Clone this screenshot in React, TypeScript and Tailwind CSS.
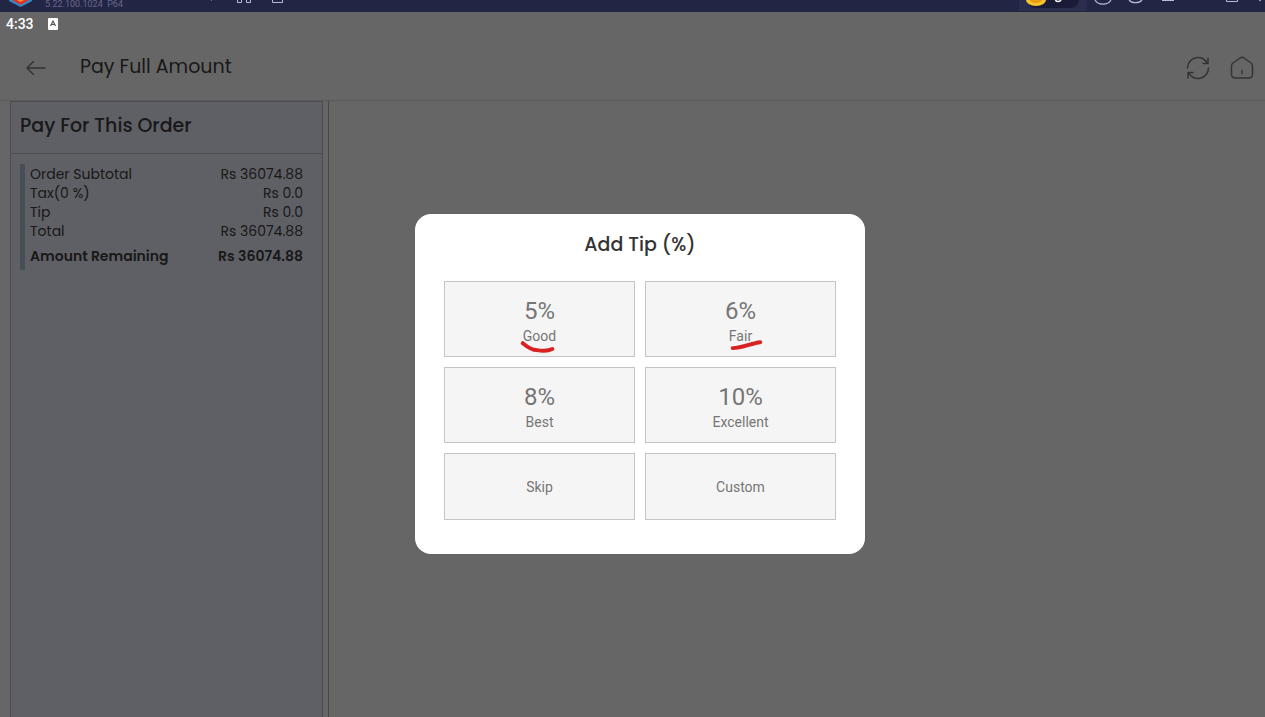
import React from 'react';

interface SummaryRow {
  label: string;
  value: string;
}

interface TipOption {
  percent: string;
  label: string;
  mark?: string;
}

const summary: SummaryRow[] = [
  { label: 'Order Subtotal', value: 'Rs 36074.88' },
  { label: 'Tax(0 %)', value: 'Rs 0.0' },
  { label: 'Tip', value: 'Rs 0.0' },
  { label: 'Total', value: 'Rs 36074.88' },
];

// mark is the hand-drawn underline, in the button's own 190x75 space
const tips: TipOption[] = [
  { percent: '5%', label: 'Good', mark: 'M78 62 C83 66 88 69 92 69 C98 70 104 70 108 68' },
  { percent: '6%', label: 'Fair', mark: 'M87 67 C97 67 106 62 115 61' },
  { percent: '8%', label: 'Best' },
  { percent: '10%', label: 'Excellent' },
];

const EmulatorBar: React.FC = () => (
  <div className="h-3 shrink-0 overflow-hidden bg-[#232544] flex items-start justify-between">
    <div className="flex items-start pl-2">
      <svg className="w-6 h-3" viewBox="0 0 24 12" fill="none">
        <path d="M1 0 V1 L12.500 7 L24 1 V0 Z" fill="#2d8fd0" />
        <path d="M4 0 L12.500 5 L21 0 Z" fill="#e02f2a" />
        <path d="M9 0 L12.500 2 L16 0 Z" fill="#f59a23" />
      </svg>
      <span className="ml-[13px] w-[166px] whitespace-pre font-[Roboto,sans-serif] text-[9px] leading-2 text-[#66688c]">5.22.100.1024  P64</span>
      <svg className="w-20 h-3" viewBox="0 0 80 12" fill="none" stroke="#b9bbdc">
        <path d="M0 0 V1" />
        <path d="M26.500 0 V2.500 H30.500 V0 M35.500 0 V2.500 H39.500 V0 M61.500 0 V2.500 H71.500 V0" />
      </svg>
    </div>
    <svg className="w-[246px] h-3 shrink-0" viewBox="0 0 246 12" fill="none">
      <path d="M0 0 H68 V11 H0 Z" fill="#2b2d4f" />
      <path d="M8 0 H60 C59 5 56 8 51 8 H17 C12 8 9 5 8 0 Z" fill="#1a1b36" />
      <path d="M7 0 A10 6 0 0 0 27 0 Z" fill="#f6c62c" />
      <path d="M11 0 A6 3 0 0 0 23 0 Z" fill="#e99c14" />
      <path d="M36.500 0 C37 2 41 2 42 0" stroke="#fff" strokeWidth="1.500" />
      <path d="M76 0 C79 5.500 89 5.500 92 0 M110 0 C113 3.500 120 3.500 123 0" stroke="#b9bbdc" strokeWidth="1.200" />
      <path d="M143 0.500 H155 M207.500 0 V1.500 H218.500 V0 M240 1 L242 0" stroke="#b9bbdc" />
    </svg>
  </div>
);

const OrderPanel: React.FC = () => (
  <aside className="w-[313px] shrink-0 border border-b-0 border-[#c0c0c8] bg-[#edeffd]">
    <h2 className="h-[52px] border-b border-[#c0c0c8] px-[9px] pt-[9px] text-[19px] leading-[30px] font-medium text-[#404040]">Pay For This Order</h2>
    <div className="ml-[9px] mr-[19px] mt-[10px] border-l-5 border-[#b4c2d6] pt-px pl-[5px] text-sm text-[#404040]">
      <dl>
        {summary.map((row) => (
          <div key={row.label} className="flex justify-between leading-[19px]">
            <dt>{row.label}</dt>
            <dd>{row.value}</dd>
          </div>
        ))}
        <div className="flex justify-between pt-1 pb-[3px] leading-[22px] font-semibold">
          <dt>Amount Remaining</dt>
          <dd>Rs 36074.88</dd>
        </div>
      </dl>
    </div>
  </aside>
);

const TipDialog: React.FC = () => (
  <div role="dialog" aria-modal="true" aria-labelledby="tip-title" className="w-[450px] rounded-2xl bg-white px-[29px] pt-4 pb-[34px]">
    <h2 id="tip-title" className="text-center text-[19px] leading-[30px] font-medium text-[#333]">Add Tip (%)</h2>
    <div className="mt-[21px] grid grid-cols-2 gap-[10px] font-[Roboto,sans-serif] text-[#757575]">
      {tips.map((tip) => (
        <button key={tip.label} className="relative flex h-[76px] flex-col items-center border border-[#c4c4c4] bg-[#f5f5f5] pt-[14px]">
          <span className="text-2xl leading-[30px]">{tip.percent}</span>
          <span className="text-sm leading-5">{tip.label}</span>
          {tip.mark && (
            <svg className="absolute inset-0 w-full h-full" viewBox="0 0 190 75" fill="none" stroke="#d92323" strokeWidth="4" strokeLinecap="round">
              <path d={tip.mark} />
            </svg>
          )}
        </button>
      ))}
      {['Skip', 'Custom'].map((label) => (
        <button key={label} className="h-[67px] border border-[#c4c4c4] bg-[#f5f5f5] text-sm">{label}</button>
      ))}
    </div>
  </div>
);

const App: React.FC = () => {
  return (
    <div className="flex min-h-screen flex-col bg-white font-[Poppins,Inter,sans-serif]">
      <EmulatorBar />
      <div className="relative flex grow flex-col">
        <div className="h-6 shrink-0" />
        <header className="flex h-[65px] shrink-0 items-center border-b border-[#e0e0e0] pl-6 pr-[11px] text-[#808080]">
          <button aria-label="Back">
            <svg className="w-6 h-6" viewBox="0 0 24 24" fill="none" stroke="currentColor" strokeWidth="1.500" strokeLinecap="round" strokeLinejoin="round">
              <path d="M9.500 5.500 L3 12 L9.500 18.500 M3.500 12 H21" />
            </svg>
          </button>
          <h1 className="ml-8 grow pb-[3px] text-[19px] leading-[30px] text-[#404040]">Pay Full Amount</h1>
          <button aria-label="Refresh">
            <svg className="w-6 h-6" viewBox="0 0 24 24" fill="none" stroke="currentColor" strokeWidth="1.500" strokeLinecap="round" strokeLinejoin="round">
              <path d="M1.500 12 A10.500 10.500 0 0 1 21.500 7.500 M22 2 V7.500 H17" />
              <path d="M22.500 12 A10.500 10.500 0 0 1 2.500 16.500 M2 22 V16.500 H7" />
            </svg>
          </button>
          <button aria-label="Home" className="ml-5">
            <svg className="w-6 h-6" viewBox="0 0 24 24" fill="none" stroke="currentColor" strokeWidth="1.500" strokeLinecap="round" strokeLinejoin="round">
              <path d="M1.500 10 Q1.500 8 3 7 L10 2 Q12 0.700 14 2 L21 7 Q22.500 8 22.500 10 V18 Q22.500 22 18.500 22 H5.500 Q1.500 22 1.500 18 Z M12 14.500 V17.500" />
            </svg>
          </button>
        </header>
        <main className="flex grow pl-[10px]">
          <OrderPanel />
          <section className="ml-[5px] grow border-l border-[#b5b5b5]" />
        </main>

        <div className="absolute inset-0 flex items-start justify-center bg-black/60 pt-[202px] pl-[15px]">
          <TipDialog />
        </div>
        <div className="absolute top-0 left-0 flex h-6 items-center gap-[14px] pl-[6px] font-[Roboto,sans-serif] text-sm font-medium text-white">
          <span>4:33</span>
          <svg className="w-[10px] h-3" viewBox="0 0 10 12">
            <rect width="10" height="12" rx="1" fill="#fff" />
            <path d="M2.500 8 L5 3 L7.500 8 M3.500 6.500 H6.500" fill="none" stroke="#555" strokeWidth="1.200" />
          </svg>
        </div>
      </div>
    </div>
  );
};

export default App;
